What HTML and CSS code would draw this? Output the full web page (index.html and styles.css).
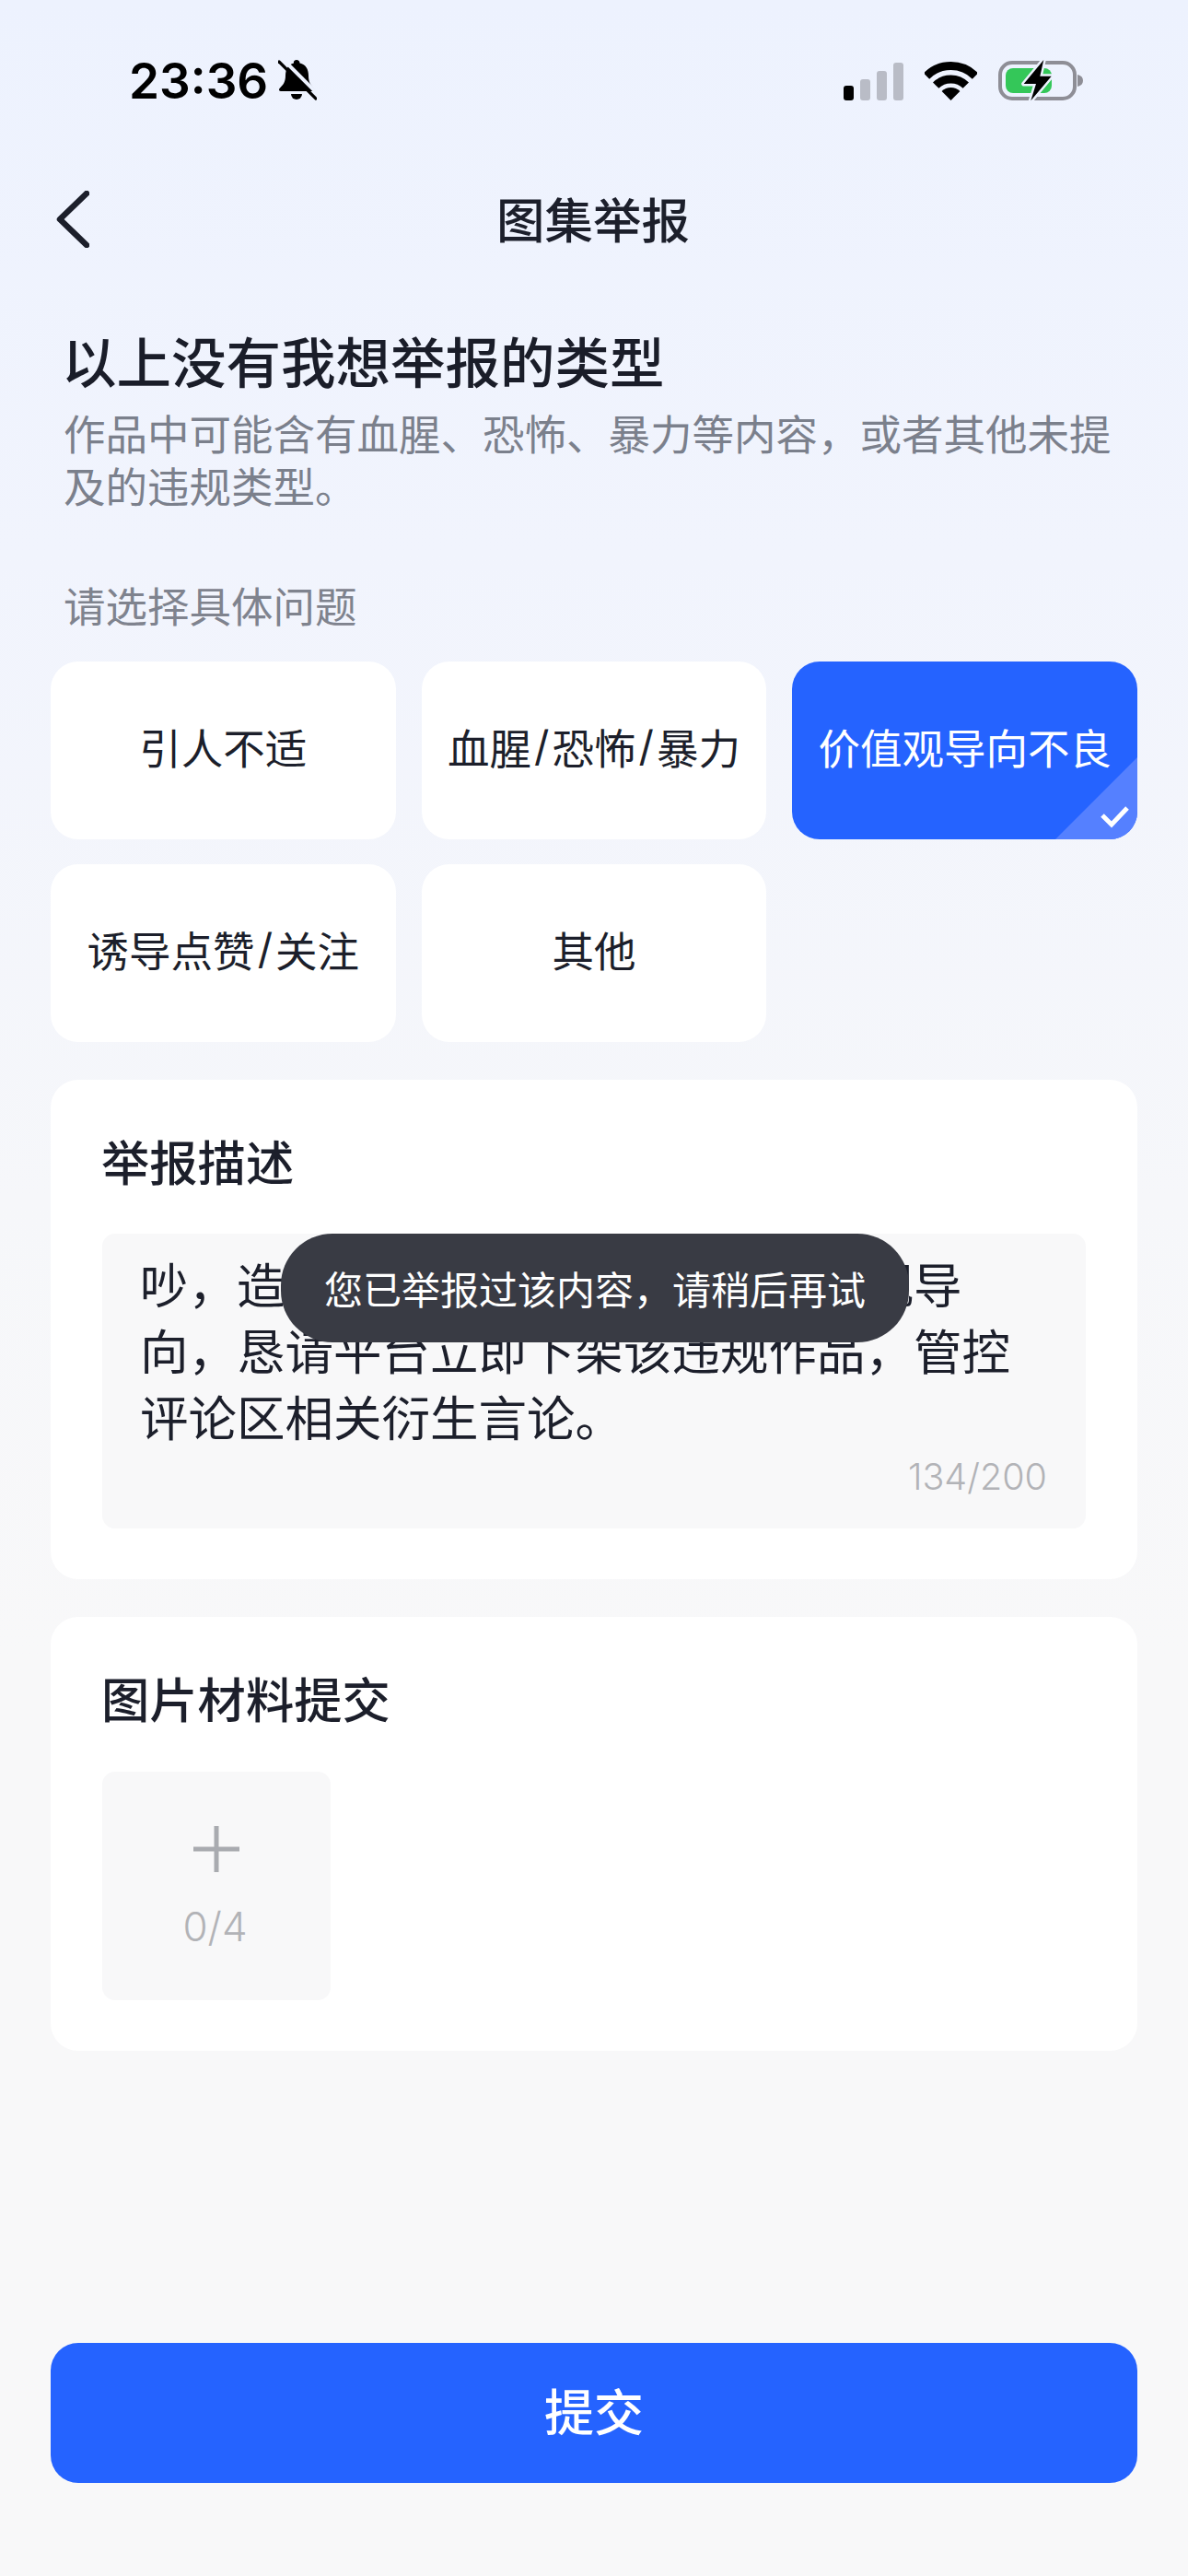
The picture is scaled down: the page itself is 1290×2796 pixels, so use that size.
FILE: index.html
```html
<!DOCTYPE html>
<html lang="zh-CN">
<head>
    <meta charset="UTF-8">
    <meta name="viewport" content="width=device-width, initial-scale=1.0">
    <title>图集举报</title>
    <link rel="stylesheet" href="styles.css">
</head>
<body>
    <div class="status-bar">
        <div class="status-left">
            <span class="clock">23:36</span>
            <svg class="bell" width="42" height="46" viewBox="0 0 42 46">
                <path d="M20 1c2 0 3.5 1.5 3.5 3.5C30 6 33 11 33 18c0 7 2 10 6 14 1 1 .5 3-1.5 3H3c-2 0-2.5-2-1.5-3 4-4 6.500-7 6.500-14 0-7 3-12 9-13.500C16.500 2.500 18 1 20 1z" fill="#000"/>
                <path d="M14 38h12a6 6 0 0 1-12 0z" fill="#000"/>
                <path d="M4 -1L45 40" stroke="#edf2fe" stroke-width="4"/>
                <path d="M1 3L41 43" stroke="#000" stroke-width="3.200" stroke-linecap="round"/>
            </svg>
        </div>
        <div class="status-right">
            <div class="signal">
                <span class="bar bar-on bar-1"></span>
                <span class="bar bar-2"></span>
                <span class="bar bar-3"></span>
                <span class="bar bar-4"></span>
            </div>
            <svg class="wifi" width="57" height="42" viewBox="0 0 57 42">
                <path d="M2 15.500A37.500 37.500 0 0 1 55 15.500" fill="none" stroke="#000" stroke-width="9"/>
                <path d="M12.200 25.700A23 23 0 0 1 44.800 25.700" fill="none" stroke="#000" stroke-width="9"/>
                <path d="M28.500 42L18.600 32.100A14 14 0 0 1 38.400 32.100z" fill="#000"/>
            </svg>
            <svg class="battery" width="93" height="46" viewBox="0 0 93 46">
                <rect x="2" y="3" width="81" height="39" rx="13" fill="none" stroke="#8e8e96" stroke-width="4"/>
                <path d="M86 16c4 1 6 3 6 6.500s-2 5.500-6 6.500z" fill="#8e8e96"/>
                <rect x="8" y="9" width="50" height="27" rx="8" fill="#34c759"/>
                <path d="M49.300 0L27.700 26H41L35.300 44.300 57.700 17.700H45.300z" fill="#000" stroke="#edf2fe" stroke-width="5" paint-order="stroke" stroke-linejoin="round"/>
            </svg>
        </div>
    </div>

    <div class="nav">
        <svg class="back" width="36" height="62" viewBox="0 0 36 62">
            <path d="M33 3L4 31L33 59" fill="none" stroke="#1c1f2b" stroke-width="6.500" stroke-linecap="round" stroke-linejoin="round"/>
        </svg>
        <div class="nav-title">图集举报</div>
    </div>

    <div class="intro">
        <h1 class="intro-title">以上没有我想举报的类型</h1>
        <p class="intro-desc">作品中可能含有血腥、恐怖、暴力等内容，或者其他未提及的违规类型。</p>
        <div class="intro-label">请选择具体问题</div>
    </div>

    <div class="chips">
        <div class="chip">引人不适</div>
        <div class="chip">血腥<span class="slash">/</span>恐怖<span class="slash">/</span>暴力</div>
        <div class="chip chip-active">
            价值观导向不良
            <svg class="chip-corner" width="90" height="90" viewBox="0 0 90 90">
                <path d="M90 1V90H1z" fill="#5580ff"/>
                <path d="M52 64L62 74L79 56" fill="none" stroke="#fff" stroke-width="5"/>
            </svg>
        </div>
        <div class="chip">诱导点赞<span class="slash">/</span>关注</div>
        <div class="chip">其他</div>
    </div>

    <div class="card card-desc">
        <div class="card-title">举报描述</div>
        <div class="textbox">
            <div class="textbox-text">吵，造成恶劣影响，传播不良价值观导<br>向，恳请平台立即下架该违规作品，管控<br>评论区相关衍生言论。</div>
            <div class="textbox-count">134/200</div>
        </div>
    </div>

    <div class="card card-images">
        <div class="card-title">图片材料提交</div>
        <div class="upload">
            <svg class="upload-plus" width="50" height="50" viewBox="0 0 50 50">
                <path d="M25 0V50M0 25H50" stroke="#a9abb0" stroke-width="5"/>
            </svg>
            <div class="upload-count">0/4</div>
        </div>
    </div>

    <button class="submit">提交</button>

    <div class="toast">您已举报过该内容，请稍后再试</div>
</body>
</html>
```

FILE: styles.css
```css
* {
    box-sizing: border-box;
}

html, body {
    margin: 0;
    padding: 0;
}

body {
    position: relative;
    width: 1290px;
    height: 2796px;
    display: flex;
    flex-direction: column;
    overflow: hidden;
    font-family: Inter, "Noto Sans CJK SC", sans-serif;
    color: #1c1f2b;
    background: linear-gradient(180deg, #edf2fe 0, #f1f4fd 600px, #f6f7fa 1300px, #f8f8f9 1800px, #f8f8f9 100%);
}

/* status bar */
.status-bar {
    height: 176px;
    flex: none;
    display: flex;
    justify-content: space-between;
    align-items: center;
    padding: 0 113px 0 140px;
}

.status-left {
    display: flex;
    align-items: center;
    gap: 11px;
}

.clock {
    font-size: 53px;
    font-weight: 600;
    line-height: 60px;
    color: #000;
}

.bell {
    margin-top: -2px;
}

.status-right {
    display: flex;
    align-items: center;
    gap: 23px;
}

.signal {
    display: flex;
    align-items: flex-end;
    gap: 7px;
    height: 41px;
}

.bar {
    width: 11px;
    border-radius: 3px;
    background: #b9bcc6;
}

.bar-on {
    background: #000;
}

.bar-1 { height: 16px; }
.bar-2 { height: 23px; }
.bar-3 { height: 32px; }
.bar-4 { height: 41px; }

.wifi, .battery {
    display: block;
}

/* nav */
.nav {
    height: 124px;
    flex: none;
    display: grid;
    grid-template-columns: 1fr auto 1fr;
    align-items: center;
    padding-left: 61px;
}

.nav-title {
    padding-bottom: 4px;
    font-size: 52.500px;
    font-weight: 500;
    margin-left: -63px;
}

/* intro */
.intro {
    padding: 58px 69px 0;
}

.intro-title {
    margin: 0 0 0 -2px;
    font-size: 59.500px;
    font-weight: 500;
    line-height: 72px;
    color: #1a1d29;
}

.intro-desc {
    margin: 14px 0 0;
    font-size: 45.500px;
    line-height: 57px;
    color: #7b808c;
}

.intro-label {
    margin-top: 72px;
    font-size: 45.500px;
    line-height: 60px;
    color: #7f838e;
}

/* chips */
.chips {
    margin-top: 28px;
    padding: 0 55px;
    display: grid;
    grid-template-columns: repeat(3, 1fr);
    grid-auto-rows: 193px;
    gap: 27px 28px;
}

.chip {
    position: relative;
    display: flex;
    align-items: center;
    justify-content: center;
    overflow: hidden;
    padding-bottom: 10px;
    font-size: 45.500px;
    white-space: nowrap;
    background: #fff;
    border-radius: 30px;
}

.slash {
    margin: 0 3px;
}

.chip-active {
    color: #fff;
    background: #2563ff;
}

.chip-corner {
    position: absolute;
    right: 0;
    bottom: 0;
}

/* cards */
.card {
    margin: 0 55px;
    padding: 56px 56px 55px;
    background: #fff;
    border-radius: 30px;
}

.card-desc {
    margin-top: 41px;
}

.card-images {
    margin-top: 41px;
}

.card-title {
    margin-left: -1px;
    font-size: 52.300px;
    font-weight: 500;
    line-height: 70px;
}

.textbox {
    margin-top: 41px;
    height: 320px;
    padding: 21px 42px 0 41px;
    background: #f8f8f9;
    border-radius: 14px;
}

.textbox-text {
    font-size: 52.500px;
    line-height: 72px;
    white-space: nowrap;
}

.textbox-count {
    margin-top: 2px;
    font-size: 39.500px;
    font-weight: 300;
    line-height: 50px;
    text-align: right;
    color: #b2b3b7;
}

.upload {
    margin-top: 42px;
    width: 248px;
    height: 248px;
    padding-top: 59px;
    display: flex;
    flex-direction: column;
    align-items: center;
    background: #f8f8f9;
    border-radius: 14px;
}

.upload-count {
    margin: 34px 3px 0 0;
    font-size: 44px;
    font-weight: 300;
    line-height: 50px;
    color: #b2b3b7;
}

/* submit */
.submit {
    margin: auto 55px 101px;
    height: 152px;
    flex: none;
    padding: 0 0 8px;
    font-family: inherit;
    font-size: 54px;
    font-weight: 500;
    color: #fff;
    background: #2563ff;
    border: none;
    border-radius: 30px;
}

/* toast over the text box */
.toast {
    position: absolute;
    left: 305px;
    top: 1339px;
    width: 682px;
    height: 118px;
    display: flex;
    align-items: center;
    justify-content: center;
    padding-bottom: 2px;
    font-size: 42px;
    color: #fff;
    background: #393b44;
    border-radius: 56px;
}
```
